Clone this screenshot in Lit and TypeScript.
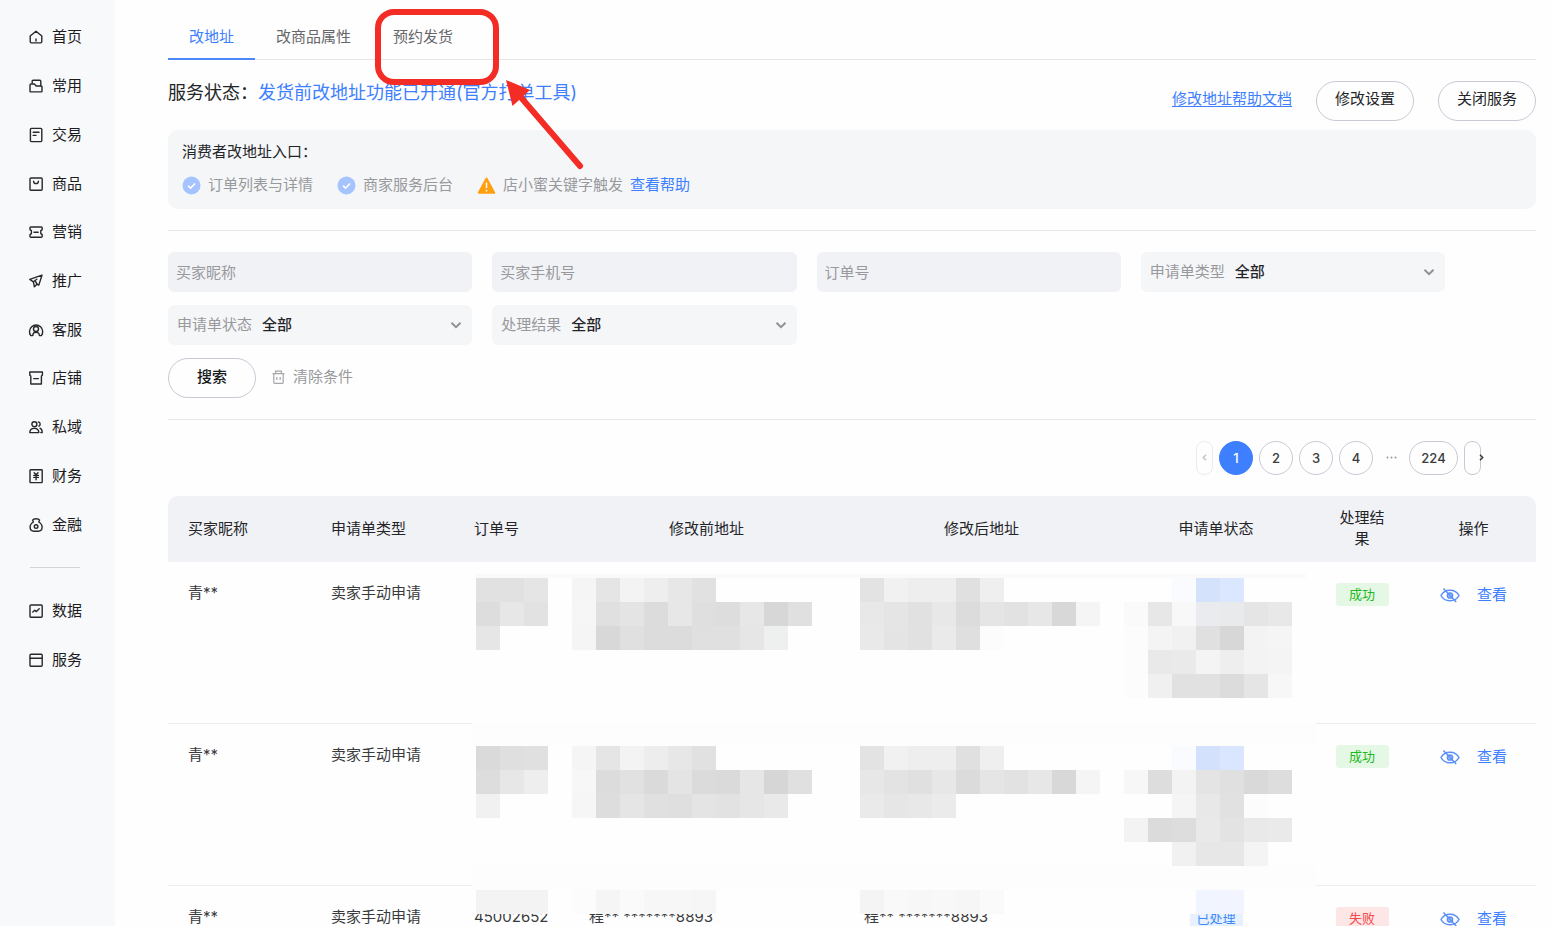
import { LitElement, html, css, svg, nothing } from "lit";
import { customElement, state } from "lit/decorators.js";
import { classMap } from "lit/directives/class-map.js";

const icons: Record<string, unknown> = {
  home: svg`<path d="M2.2 7 8 2.2 13.8 7v5.6a1.3 1.3 0 0 1-1.3 1.3h-9a1.3 1.3 0 0 1-1.3-1.3V7Z"/><path d="M8 10v2"/>`,
  often: svg`<path d="M4.200 5V3.200c0-.5.4-.9.9-.9h6.800c.5 0 .9.4.9.9v4.600"/><path d="M3 6h3.400l1.800 2h5c.5 0 .8.3.8.8V13c0 .5-.3.9-.8.9H3c-.6 0-1-.4-1-.9V7c0-.6.4-1 1-1Z"/>`,
  trade: svg`<rect x="2.4" y="1.4" width="11.4" height="13.2" rx="1"/><path d="M5.2 5.2h5.8M5.2 8.4h2.8"/>`,
  goods: svg`<rect x="2" y="2" width="12.2" height="12.2" rx="1"/><path d="M5.6 5.2a2.4 2.4 0 0 0 4.8 0"/>`,
  promo: svg`<path d="M2 5.6V4c0-.6.4-1 1-1h10.2c.6 0 1 .4 1 1v1.6l-1.4 1v3l1.4 1v1.6c0 .6-.4 1-1 1H3c-.6 0-1-.4-1-1v-1.6l1.4-1v-3L2 5.600Z"/><path d="M6 8.200h4.200"/>`,
  send: svg`<path d="M14 2.200 1.800 6.400l3.600 2.400 1 5L9 11.200l1.800.9L14 2.200Z"/><path d="m5.400 8.800 3.400-2.600M7.600 8.600 9 11.200"/>`,
  service: svg`<path d="M4.600 13.600H2.800A6.600 6.600 0 1 1 13.400 13.600h-1.800"/><circle cx="8" cy="7" r="2.500"/><path d="M4.800 13.400c0-4.200 6.600-4.200 6.600 0"/>`,
  shop: svg`<path d="M1.800 2h12.600v3.200l-1 .8v8H2.800V6l-1-.8V2Z"/><path d="M5.800 8.600h4.600"/>`,
  people: svg`<circle cx="6.400" cy="5.200" r="2.500"/><path d="M1.800 13.600c0-5.600 9-5.600 9 0h-9ZM10.400 3c2 .2 2.400 3 .6 4.200M12 9.200c1.400.6 2.200 2 2.200 4.400h-1.400"/>`,
  finance: svg`<rect x="2" y="1.800" width="12.200" height="12.800" rx=".6"/><path d="m6.200 4.800 1.900 2 1.900-2M5.800 7.400h4.600M5.800 9.400h4.600M8.100 7v4.800"/>`,
  money: svg`<path d="M5.400 5 4.600 3c1-1.600 6-1.600 7 0l-.8 2c4.600 2.600 4.400 9.200-.6 9.200H6C1 14.200.8 7.600 5.400 5Z"/><circle cx="8.100" cy="9.600" r="1.800"/>`,
  data: svg`<rect x="2" y="2" width="12.200" height="12.200" rx="1"/><path d="m4.800 9 2-1.800 1.600 1.400 2.800-2.800"/>`,
  serve: svg`<rect x="2" y="2.200" width="12.200" height="12" rx="1"/><path d="M2 6.200h12.200"/>`,
};

const primaryNav: [string, string][] = [
  ["home", "首页"], ["often", "常用"], ["trade", "交易"], ["goods", "商品"],
  ["promo", "营销"], ["send", "推广"], ["service", "客服"], ["shop", "店铺"],
  ["people", "私域"], ["finance", "财务"], ["money", "金融"],
];
const secondaryNav: [string, string][] = [["data", "数据"], ["serve", "服务"]];

@customElement("side-nav")
export class SideNav extends LitElement {
  static styles = css`
    :host { display: block; background: #f8f9fb; padding: 13px 0; box-sizing: border-box; }
    ul { list-style: none; margin: 0; padding: 0; display: grid; grid-auto-rows: 1fr; height: 536px; }
    ul.short { height: 97px; }
    li { display: flex; align-items: center; padding-left: 28px; }
    a { display: flex; align-items: center; gap: 8px; color: #1c1c1e; text-decoration: none; font-size: 15px; line-height: 22px; }
    svg { width: 16px; height: 16px; fill: none; stroke: #26282c; stroke-width: 1.4; stroke-linejoin: round; stroke-linecap: round; }
    hr { border: 0; height: 1px; background: #d4d5d9; margin: 18px 35px 19px 30px; }
  `;
  private list(items: [string, string][], short = false) {
    return html`<ul class=${classMap({ short })}>
      ${items.map(([icon, text]) => html`<li><a href="#"><svg viewBox="0 0 16 16" aria-hidden="true">${icons[icon]}</svg>${text}</a></li>`)}
    </ul>`;
  }
  render() {
    return html`<nav>${this.list(primaryNav)}<hr />${this.list(secondaryNav, true)}</nav>`;
  }
}

/* Each run: row, first column, then shades (two hex digits are a grey). */
const mosaic: [number, number, string][] = [
  [0, 0, "e1 e1 e5"], [0, 4, "f5 e5 f3 ee e7 e1"], [0, 16, "e3 f1 ee ee e0 ef"], [0, 29, "f9fbff d4e3fb dbe6ff"],
  [1, 0, "dd e7 e2"], [1, 4, "f6 e0 e4 dc e7 df dd e7 d7 e0"], [1, 16, "e8 e5 e1 e8 dc e5 e2 e7 d8 f5"], [1, 27, "fa e7 f8 e9ebee e8eaec e5 e8"],
  [2, 0, "e6"], [2, 4, "f5 d8 e0 dc dc e0 e0 e6 edf0ef"], [2, 16, "e9 e4 e1 ea df fc"], [2, 27, "fc f4 f1 e0 d7 f3 f5"],
  [3, 27, "fc e9 ea f4 ee f3 f4"],
  [4, 27, "fc f0 e1 e1 dc e5 f7"],
  [7, 0, "da df e0"], [7, 4, "f5 e5 f3 ed e7 e1"], [7, 16, "e3 f1 ee ee e0 ef"], [7, 29, "f9fbff d3e1fd dae6ff"],
  [8, 0, "dd e7 ee"], [8, 4, "f7 dc e1 da e4 db da e6 d6 e0"], [8, 16, "e7 e3 e0 e7 db e5 e2 e7 d8 f5"], [8, 27, "f7 dd f3 e4 e0 d9 dd"],
  [9, 0, "f1"], [9, 4, "f6 dd e5 e0 df e4 e2 e6 e9"], [9, 16, "ea e6 e8 eb"], [9, 29, "f5 e8 e1 fc"],
  [10, 27, "f3 db dd e9 e3 e9 ea"],
  [11, 29, "f1 e7 e7 f4"],
  [13, 0, "f3 f3 f3"], [13, 4, "fc f5 fa f7 f7 f6"], [13, 16, "f4 f9 f7 f8 f6 fa"], [13, 30, "f1f5ff f2f5ff"],
];

@customElement("privacy-mosaic")
export class PrivacyMosaic extends LitElement {
  static styles = css`
    :host { display: block; }
    svg { display: block; width: 844px; height: 340px; }
  `;
  render() {
    return html`<svg viewBox="0 0 844 340" shape-rendering="crispEdges" aria-hidden="true">
      <rect width="844" height="340" rx="4" fill="#fefefe" />
      <rect x="4" width="830" height="4" fill="#fafafa" />
      <rect y="149" width="844" height="23" fill="#fdfdfd" />
      <rect y="292" width="844" height="24" fill="#fdfdfd" />
      ${mosaic.flatMap(([row, col, shades]) =>
        shades.split(" ").map((s, i) => svg`<rect x=${4 + (col + i) * 24} y=${4 + row * 24} width="24" height="24" fill=${"#" + (s.length === 2 ? s.repeat(3) : s)}></rect>`)
      )}
    </svg>`;
  }
}

interface Row { buyer: string; kind: string; order?: string; address?: string; status?: string; ok: boolean; }
const rows: Row[] = [
  { buyer: "青**", kind: "卖家手动申请", ok: true },
  { buyer: "青**", kind: "卖家手动申请", ok: true },
  { buyer: "青**", kind: "卖家手动申请", order: "45002652", address: "程** *******8893", status: "已处理", ok: false },
];

@customElement("request-table")
export class RequestTable extends LitElement {
  static styles = css`
    :host { display: block; position: relative; }
    table { width: 100%; table-layout: fixed; border-collapse: separate; border-spacing: 0; font-size: 15px; line-height: 22px; color: #3a3b3d; }
    .c-text { width: 143px; }
    .c-order { width: 115px; }
    .c-address { width: 275px; }
    .c-status { width: 194px; }
    .c-result { width: 98px; }
    .c-action { width: 125px; }
    th { height: 66px; box-sizing: border-box; padding: 0 20px 2px; background: #f1f2f6; color: #242528; font-weight: 400; text-align: left; line-height: 21px; }
    th:first-child { border-top-left-radius: 10px; }
    th:last-child { border-top-right-radius: 10px; }
    .mid { text-align: center; }
    td { height: 162px; box-sizing: border-box; padding: 20px 20px 0; vertical-align: top; border-bottom: 1px solid #ededf0; white-space: nowrap; }
    .tag { display: inline-block; box-sizing: border-box; min-width: 53px; margin-top: 1px; padding: 0 6px; border-radius: 3px; font-size: 13px; line-height: 23px; background: #e5f8e5; color: #1fb922; }
    .tag.bad { background: #fde6e6; color: #f5484b; }
    .tag.info { background: #e6f0fe; color: #3d8af7; }
    .actions { display: flex; align-items: center; justify-content: center; gap: 17px; margin-top: 2px; }
    button { all: unset; display: flex; cursor: pointer; }
    button svg { width: 20px; height: 16px; fill: none; stroke: #5b8ff8; stroke-width: 1.5; }
    a { color: #3d7fff; text-decoration: none; }
    privacy-mosaic { position: absolute; top: 78px; left: 304px; }
  `;
  render() {
    return html`
      <table>
        <colgroup>
          <col class="c-text" /><col class="c-text" /><col class="c-order" /><col class="c-address" />
          <col class="c-address" /><col class="c-status" /><col class="c-result" /><col class="c-action" />
        </colgroup>
        <thead>
          <tr>
            <th>买家昵称</th><th>申请单类型</th><th>订单号</th>
            <th class="mid">修改前地址</th><th class="mid">修改后地址</th><th class="mid">申请单状态</th>
            <th class="mid">处理结果</th><th class="mid">操作</th>
          </tr>
        </thead>
        <tbody>
          ${rows.map((r) => html`<tr>
            <td>${r.buyer}</td><td>${r.kind}</td><td>${r.order ?? nothing}</td>
            <td>${r.address ?? nothing}</td><td>${r.address ?? nothing}</td>
            <td class="mid">${r.status ? html`<span class="tag info">${r.status}</span>` : nothing}</td>
            <td class="mid"><span class=${classMap({ tag: true, bad: !r.ok })}>${r.ok ? "成功" : "失败"}</span></td>
            <td><div class="actions">
              <button type="button" aria-label="显示"><svg viewBox="0 0 20 16"><path d="M1 8.500c3.600-7 14.400-7 18 0-3.600 7-14.400 7-18 0Z"/><circle cx="10" cy="8.500" r="2.600" fill="#a9c3fb"/><path d="M3.400 1.600 16.200 15"/></svg></button>
              <a href="#">查看</a>
            </div></td>
          </tr>`)}
        </tbody>
      </table>
      <privacy-mosaic></privacy-mosaic>
    `;
  }
}

@customElement("filter-form")
export class FilterForm extends LitElement {
  static styles = css`
    :host { display: block; font-size: 15px; }
    .grid { display: grid; grid-template-columns: repeat(4, 1fr); gap: 13px 20px; padding-right: 91px; }
    input, select, button { font: inherit; margin: 0; outline: none; }
    input { width: 100%; height: 40px; box-sizing: border-box; border: 0; border-radius: 6px; background: #f1f2f6; padding: 0 8px; color: #242528; }
    input::placeholder { color: #98999c; opacity: 1; }
    .pick { display: grid; grid-template-columns: auto 1fr; align-items: center; height: 40px; border-radius: 6px; background: #f5f6f8; }
    .pick label { grid-area: 1 / 1; padding-left: 9px; color: #98999c; }
    .pick select { grid-area: 1 / 2; height: 100%; appearance: none; border: 0; background: none; padding: 0 30px 0 10px; color: #242528; font-weight: 500; }
    .pick svg { grid-area: 1 / 2; justify-self: end; margin-right: 10px; width: 12px; height: 12px; fill: none; stroke: #909196; stroke-width: 2; pointer-events: none; }
    .bar { display: flex; align-items: flex-start; gap: 16px; margin-top: 13px; }
    .search { width: 88px; height: 40px; padding: 0 0 2px; border: 1px solid #c9c8d6; border-radius: 20px; background: #fefefe; color: #18191b; font-weight: 500; }
    .clear { display: flex; align-items: center; gap: 8px; height: 37px; padding: 0; border: 0; background: none; color: #98999c; }
    .clear svg { width: 13px; height: 14px; fill: none; stroke: #a6a7aa; stroke-width: 1.200; }
  `;
  private text(id: string, label: string) {
    return html`<input id=${id} aria-label=${label} placeholder=${label} />`;
  }
  private pick(id: string, label: string) {
    return html`<div class="pick"><label for=${id}>${label}</label><select id=${id}><option>全部</option></select>
      <svg viewBox="0 0 12 12" aria-hidden="true"><path d="m1.500 3.800 4.500 4.400 4.500-4.400"/></svg></div>`;
  }
  render() {
    return html`<form @submit=${(e: Event) => e.preventDefault()}>
      <div class="grid">
        ${this.text("buyer", "买家昵称")}${this.text("phone", "买家手机号")}${this.text("order", "订单号")}${this.pick("kind", "申请单类型")}
        ${this.pick("status", "申请单状态")}${this.pick("result", "处理结果")}
      </div>
      <div class="bar">
        <button class="search" type="submit">搜索</button>
        <button class="clear" type="reset"><svg viewBox="0 0 13 14" aria-hidden="true"><path d="M.5 3.600h12M3.600 3.400V1.200h5.800v2.200M1.800 3.600v9c0 .5.300.8.800.8h7.800c.5 0 .8-.3.800-.8v-9M4.800 7v3M8.200 7v3"/></svg>清除条件</button>
      </div>
    </form>`;
  }
}

@customElement("page-nav")
export class PageNav extends LitElement {
  static styles = css`
    :host { display: block; }
    nav { display: flex; justify-content: flex-end; gap: 6px; padding-right: 55px; }
    button { box-sizing: border-box; width: 34px; height: 34px; padding: 0 0 1px; border: 1px solid #c9c8d6; border-radius: 17px; background: #fefefe; color: #3a3b3d; font: inherit; font-size: 13px; font-weight: 500; display: flex; align-items: center; justify-content: center; }
    .on { background: #3d7fff; border-color: #3d7fff; color: #fff; }
    .wide { width: 49px; }
    .step { width: 17px; border-radius: 8px; }
    .step:disabled { border-color: #ebebef; color: #c4c5c9; }
    .next { justify-content: flex-start; padding-left: 14px; }
    svg { flex: none; width: 5px; height: 7px; fill: none; stroke: currentColor; stroke-width: 1.500; }
    .dots { display: flex; align-items: center; justify-content: center; width: 24px; height: 32px; }
    .dots svg { width: 11px; height: 3px; fill: #98999c; stroke: none; }
  `;
  @state() private page = 1;
  private num(n: number) {
    return html`<button class=${classMap({ on: n === this.page, wide: n > 99 })} @click=${() => (this.page = n)}>${n}</button>`;
  }
  render() {
    return html`<nav aria-label="分页">
      <button class="step" ?disabled=${this.page === 1} aria-label="上一页"><svg viewBox="0 0 5 7"><path d="M4 .8 1.300 3.500 4 6.200"/></svg></button>
      ${[1, 2, 3, 4].map((n) => this.num(n))}
      <span class="dots"><svg viewBox="0 0 11 3"><circle cx="1.500" cy="1.500" r="1"/><circle cx="5.500" cy="1.500" r="1"/><circle cx="9.500" cy="1.500" r="1"/></svg></span>
      ${this.num(224)}
      <button class="step next" aria-label="下一页"><svg viewBox="0 0 5 7"><path d="M1 .8 3.700 3.500 1 6.200"/></svg></button>
    </nav>`;
  }
}

@customElement("app-root")
export class AppRoot extends LitElement {
  static styles = css`
    :host { display: grid; grid-template-columns: 115px minmax(0, 1fr); position: relative; height: 100vh; overflow: hidden; background: #fefefe; color: #242528; font: 15px/22px Inter, "Noto Sans CJK SC", sans-serif; }
    main { padding: 14px 16px 0 53px; min-width: 0; }
    .tabs { display: flex; border-bottom: 1px solid #e6e6ea; }
    .tabs button { all: unset; cursor: pointer; padding: 12px 21px 10px; margin-bottom: -1px; border-bottom: 2px solid transparent; color: #66676a; }
    .tabs button.on { color: #3d7fff; border-bottom-color: #4d88fb; }
    .head { display: flex; align-items: flex-start; gap: 24px; margin-top: 21px; }
    .state { flex: 1; margin: 0; font-size: 18px; line-height: 24px; font-weight: 400; }
    .state em { font-style: normal; color: #3d7fff; }
    .head a { line-height: 36px; text-underline-offset: 2px; }
    a { color: #3d7fff; }
    .pill { width: 98px; height: 40px; box-sizing: border-box; border: 1px solid #c9c8d6; border-radius: 20px; background: #fefefe; padding: 0 0 4px; font: inherit; color: #242528; }
    .entry { margin-top: 9px; padding: 11px 14px 13px; border-radius: 10px; background: #f5f6f8; }
    .entry p { margin: 0 0 11px; }
    .ways { display: flex; align-items: center; gap: 24px; color: #98999c; }
    .way { display: flex; align-items: center; gap: 7px; }
    .way a { text-decoration: none; }
    .way svg { width: 19px; height: 19px; }
    .line { border: 0; height: 1px; margin: 21px 0; background: #e6e6ec; }
    request-table { margin-top: 21px; }
    .marks { position: absolute; top: 0; left: 368px; width: 224px; height: 176px; pointer-events: none; }
  `;
  @state() private tab = 0;
  render() {
    const tick = html`<svg viewBox="0 0 19 19" aria-hidden="true"><circle cx="9.500" cy="9.500" r="9" fill="#a5c3ff"/><path d="m6 9.600 2.500 2.500 4.600-4.600" fill="none" stroke="#fff" stroke-width="1.500"/></svg>`;
    return html`
      <side-nav></side-nav>
      <main>
        <div class="tabs" role="tablist">
          ${["改地址", "改商品属性", "预约发货"].map((t, i) => html`<button role="tab" aria-selected=${i === this.tab} class=${classMap({ on: i === this.tab })} @click=${() => (this.tab = i)}>${t}</button>`)}
        </div>
        <div class="head">
          <h1 class="state">服务状态：<em>发货前改地址功能已开通(官方打单工具)</em></h1>
          <a href="#">修改地址帮助文档</a>
          <button class="pill" type="button">修改设置</button>
          <button class="pill" type="button">关闭服务</button>
        </div>
        <section class="entry">
          <p>消费者改地址入口：</p>
          <div class="ways">
            <span class="way">${tick}订单列表与详情</span>
            <span class="way">${tick}商家服务后台</span>
            <span class="way"><svg viewBox="0 0 19 19" aria-hidden="true"><path d="M9.500 2.500 17.200 16.800H1.800Z" fill="#ff9f0e" stroke="#ff9f0e" stroke-width="2" stroke-linejoin="round"/><path d="M9.500 6.500v5.500M9.500 13.700v1.700" stroke="#fff" stroke-width="1.500"/></svg>店小蜜关键字触发<a href="#">查看帮助</a></span>
          </div>
        </section>
        <hr class="line" />
        <filter-form></filter-form>
        <hr class="line" />
        <page-nav></page-nav>
        <request-table></request-table>
      </main>
      <svg class="marks" viewBox="0 0 224 176" aria-hidden="true">
        <rect x="10" y="12" width="118" height="70" rx="16" fill="none" stroke="#f42c26" stroke-width="6"/>
        <path d="m150 94 62 72" stroke="#f42c26" stroke-width="6" stroke-linecap="round"/>
        <path d="M138 80 162 90 144.500 106Z" fill="#f42c26"/>
      </svg>
    `;
  }
}
